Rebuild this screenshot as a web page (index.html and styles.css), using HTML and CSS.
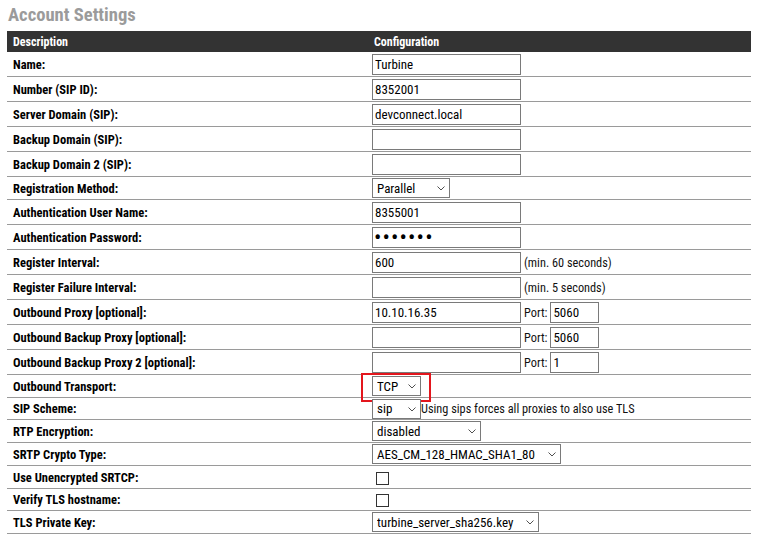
FILE: index.html
```html
<!DOCTYPE html>
<html>
<head>
<meta charset="utf-8">
<link rel="stylesheet" href="styles.css">
</head>
<body>
<div class="page">
  <h1 class="title">Account Settings</h1>
  <table class="settings">
    <thead>
      <tr><th class="c-desc">Description</th><th class="c-conf">Configuration</th></tr>
    </thead>
    <tbody>
      <tr class="r-in"><td class="lbl">Name:</td><td class="cfg"><input class="txt" type="text" value="Turbine"></td></tr>
      <tr class="r-in"><td class="lbl">Number (SIP ID):</td><td class="cfg"><input class="txt" type="text" value="8352001"></td></tr>
      <tr class="r-in"><td class="lbl">Server Domain (SIP):</td><td class="cfg"><input class="txt" type="text" value="devconnect.local"></td></tr>
      <tr class="r-in"><td class="lbl">Backup Domain (SIP):</td><td class="cfg"><input class="txt" type="text" value=""></td></tr>
      <tr class="r-in"><td class="lbl">Backup Domain 2 (SIP):</td><td class="cfg"><input class="txt" type="text" value=""></td></tr>
      <tr class="r-sel"><td class="lbl">Registration Method:</td><td class="cfg"><span class="dd w-par"><select class="sel"><option>Parallel</option></select><svg class="chev" width="8" height="5" viewBox="0 0 8 5"><path d="M0.5 0.5 L4 4 L7.5 0.5"/></svg></span></td></tr>
      <tr class="r-in"><td class="lbl">Authentication User Name:</td><td class="cfg"><input class="txt" type="text" value="8355001"></td></tr>
      <tr class="r-in"><td class="lbl">Authentication Password:</td><td class="cfg"><input class="txt pw" type="password" value="1234567"></td></tr>
      <tr class="r-in"><td class="lbl">Register Interval:</td><td class="cfg"><input class="txt" type="text" value="600"> <span class="hint">(min. 60 seconds)</span></td></tr>
      <tr class="r-in"><td class="lbl">Register Failure Interval:</td><td class="cfg"><input class="txt" type="text" value=""> <span class="hint">(min. 5 seconds)</span></td></tr>
      <tr class="r-in"><td class="lbl">Outbound Proxy [optional]:</td><td class="cfg"><input class="txt" type="text" value="10.10.16.35"> <span class="hint">Port:</span> <input class="txt port" type="text" value="5060"></td></tr>
      <tr class="r-in"><td class="lbl">Outbound Backup Proxy [optional]:</td><td class="cfg"><input class="txt" type="text" value=""> <span class="hint">Port:</span> <input class="txt port" type="text" value="5060"></td></tr>
      <tr class="r-in"><td class="lbl">Outbound Backup Proxy 2 [optional]:</td><td class="cfg"><input class="txt" type="text" value=""> <span class="hint">Port:</span> <input class="txt port" type="text" value="1"></td></tr>
      <tr class="r-sel"><td class="lbl">Outbound Transport:</td><td class="cfg"><span class="dd w-tcp"><select class="sel"><option>TCP</option></select><svg class="chev" width="8" height="5" viewBox="0 0 8 5"><path d="M0.5 0.5 L4 4 L7.5 0.5"/></svg><span class="mark"></span></span></td></tr>
      <tr class="r-sel2"><td class="lbl">SIP Scheme:</td><td class="cfg"><span class="dd w-sip"><select class="sel"><option>sip</option></select><svg class="chev" width="8" height="5" viewBox="0 0 8 5"><path d="M0.5 0.5 L4 4 L7.5 0.5"/></svg></span><span class="hint">Using sips forces all proxies to also use TLS</span></td></tr>
      <tr class="r-sel"><td class="lbl">RTP Encryption:</td><td class="cfg"><span class="dd w-dis"><select class="sel"><option>disabled</option></select><svg class="chev" width="8" height="5" viewBox="0 0 8 5"><path d="M0.5 0.5 L4 4 L7.5 0.5"/></svg></span></td></tr>
      <tr class="r-sel"><td class="lbl">SRTP Crypto Type:</td><td class="cfg"><span class="dd w-aes"><select class="sel"><option>AES_CM_128_HMAC_SHA1_80</option></select><svg class="chev" width="8" height="5" viewBox="0 0 8 5"><path d="M0.5 0.5 L4 4 L7.5 0.5"/></svg></span></td></tr>
      <tr class="r-cb"><td class="lbl">Use Unencrypted SRTCP:</td><td class="cfg"><input class="cb" type="checkbox"></td></tr>
      <tr class="r-cb2"><td class="lbl">Verify TLS hostname:</td><td class="cfg"><input class="cb" type="checkbox"></td></tr>
      <tr class="r-sel"><td class="lbl">TLS Private Key:</td><td class="cfg"><span class="dd w-key"><select class="sel"><option>turbine_server_sha256.key</option></select><svg class="chev" width="8" height="5" viewBox="0 0 8 5"><path d="M0.5 0.5 L4 4 L7.5 0.5"/></svg></span></td></tr>
    </tbody>
  </table>
</div>
</body>
</html>
```
FILE: styles.css
```css
html, body {
  margin: 0;
  padding: 0;
  background: #ffffff;
}

.page {
  padding-left: 7px;
  font-family: "Roboto Condensed", "Liberation Sans Narrow", "DejaVu Sans Condensed", Roboto, sans-serif;
  color: #000;
}

.title {
  margin: 0;
  padding: 4px 0 5px 1px;
  height: 22px;
  line-height: 22px;
  font-size: 18.6px;
  font-weight: bold;
  color: #9b9b9b;
}

.settings {
  width: 744px;
  border-collapse: collapse;
  border-spacing: 0;
  table-layout: fixed;
}

.settings th {
  background: #333333;
  color: #ffffff;
  font-size: 12px;
  font-weight: bold;
  text-align: left;
  height: 21px;
  padding: 0 0 0 6px;
  vertical-align: middle;
}

.c-desc { width: 355px; }

.settings td {
  padding: 0;
  border-bottom: 1px solid #9a9a9a;
  vertical-align: middle;
  white-space: nowrap;
}

.r-in td { height: 24px; }
.r-sel td { height: 22px; }
.r-sel2 td { height: 21px; }
.r-cb td { height: 22px; }
.r-cb2 td { height: 21px; }

.lbl {
  padding-left: 6px !important;
  font-size: 12.5px;
  font-weight: bold;
}

.cfg {
  padding-left: 4px !important;
  font-size: 13px;
}

.txt {
  box-sizing: border-box;
  width: 149px;
  height: 21px;
  margin: 0;
  padding: 0 2px;
  border: 1px solid #7a7a7a;
  font-family: inherit;
  font-size: 13px;
  color: #000;
  vertical-align: middle;
}

.txt.pw {
  font-size: 22px;
  letter-spacing: 1.1px;
  padding-left: 1px;
}

.txt.port { width: 49px; }

.hint {
  font-size: 12.3px;
  color: #111;
  vertical-align: middle;
}

.dd {
  position: relative;
  display: inline-block;
  vertical-align: middle;
  height: 20px;
}

.sel {
  appearance: none;
  -webkit-appearance: none;
  display: block;
  box-sizing: border-box;
  width: 100%;
  height: 20px;
  margin: 0;
  padding: 0 0 0 4px;
  border: 1px solid #7a7a7a;
  border-radius: 0;
  background: #fff;
  font-family: inherit;
  font-size: 13px;
  color: #000;
}

.chev {
  position: absolute;
  right: 5px;
  top: 8px;
  fill: none;
  stroke: #505050;
  stroke-width: 1;
  pointer-events: none;
}

.w-par { width: 78px; }
.w-tcp { width: 49px; }
.w-sip { width: 49px; }
.w-dis { width: 109px; }
.w-aes { width: 189px; }
.w-key { width: 167px; }

.cb {
  appearance: none;
  -webkit-appearance: none;
  box-sizing: border-box;
  width: 13px;
  height: 13px;
  margin: 0 0 0 4px;
  border: 1px solid #333;
  background: #fff;
  vertical-align: middle;
}

.mark {
  position: absolute;
  left: -11px;
  top: -3px;
  width: 70px;
  height: 29px;
  box-sizing: border-box;
  border: 2px solid #e3161d;
  pointer-events: none;
}
```
